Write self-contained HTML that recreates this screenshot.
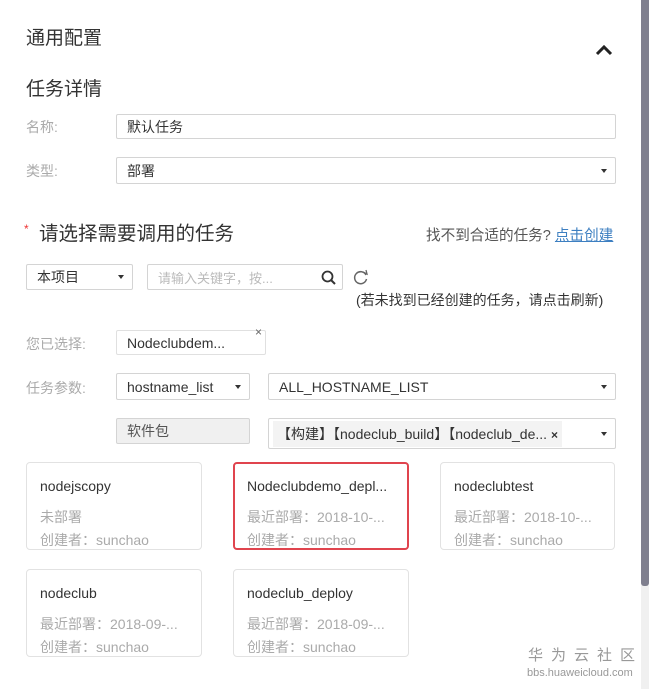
<!DOCTYPE html>
<html><head><meta charset="utf-8"><style>
*{box-sizing:border-box;margin:0;padding:0}
body{width:649px;height:689px;background:#fff;position:relative;overflow:hidden;font-family:"Liberation Sans","Noto Sans CJK SC",sans-serif;color:#333}
.a{position:absolute;white-space:nowrap}
.box{position:absolute;border:1px solid #d4d4d4;border-radius:2px;background:#fff;font-size:14px;color:#333;padding-left:10px;display:flex;align-items:center}
.lbl{position:absolute;font-size:14px;color:#aaa}
.caret{position:absolute;right:8px;top:50%;margin-top:-2px;width:0;height:0;border-left:3.5px solid transparent;border-right:3.5px solid transparent;border-top:4px solid #333}
.card{position:absolute;border:1px solid #e2e2e2;border-radius:4px;width:176px;height:88px;padding-left:13px}
.card .t{position:absolute;left:13px;top:15px;font-size:14px;color:#333}
.card .s1{position:absolute;left:13px;top:44px;font-size:14px;color:#aaa}
.card .s2{position:absolute;left:13px;top:67px;font-size:14px;color:#aaa}
</style></head><body>
<div style="position:absolute;left:641px;top:0;width:8px;height:689px;background:#f0f0f0"></div>
<div style="position:absolute;left:641px;top:0;width:8px;height:586px;background:#7f7f8e;border-radius:0 0 3px 3px"></div>
<div class="a" style="left:26px;top:23px;font-size:19px;color:#333">通用配置</div>
<svg class="a" style="left:595px;top:44px" width="18" height="12"><path d="M2 10 L9 3 L16 10" stroke="#222" stroke-width="3" fill="none"/></svg>
<div class="a" style="left:26px;top:74px;font-size:19px;color:#333">任务详情</div>
<div class="lbl" style="left:26px;top:117px">名称:</div>
<div class="box" style="left:116px;top:114px;width:500px;height:25px">默认任务</div>
<div class="lbl" style="left:26px;top:161px">类型:</div>
<div class="box" style="left:116px;top:157px;width:500px;height:27px">部署<span class="caret"></span></div>
<div class="a" style="left:24px;top:222px;color:#e33;font-size:12px">*</div>
<div class="a" style="left:39px;top:217px;font-size:19.5px;color:#333">请选择需要调用的任务</div>
<div class="a" style="left:426px;top:224px;font-size:14.6px;color:#555">找不到合适的任务? <span style="color:#3d7fc1;text-decoration:underline">点击创建</span></div>
<div class="box" style="left:26px;top:264px;width:107px;height:26px">本项目<span class="caret"></span></div>
<div class="box" style="left:147px;top:264px;width:196px;height:26px;color:#bbb;font-size:13px">请输入关键字，按...
<svg style="position:absolute;right:6px;top:5px" width="15" height="15"><circle cx="6.5" cy="6.5" r="5" stroke="#333" stroke-width="1.8" fill="none"/><path d="M10 10 L14 14" stroke="#333" stroke-width="2"/></svg></div>
<svg class="a" style="left:352px;top:268px" width="18" height="18"><path d="M14 7 A6 6 0 1 0 14.5 11" stroke="#666" stroke-width="1.5" fill="none"/><path d="M11 4 L15 6 L14 2" stroke="#666" stroke-width="1.3" fill="none"/></svg>
<div class="a" style="left:356px;top:290px;font-size:14px;color:#333">(若未找到已经创建的任务，请点击刷新)</div>
<div class="lbl" style="left:26px;top:334px">您已选择:</div>
<div class="box" style="left:116px;top:330px;width:150px;height:25px;border-color:#e0e0e0">Nodeclubdem...</div>
<div class="a" style="left:255px;top:325px;font-size:12px;color:#666">×</div>
<div class="lbl" style="left:26px;top:378px">任务参数:</div>
<div class="box" style="left:116px;top:373px;width:134px;height:27px">hostname_list<span class="caret"></span></div>
<div class="box" style="left:268px;top:373px;width:348px;height:27px">ALL_HOSTNAME_LIST<span class="caret"></span></div>
<div class="box" style="left:116px;top:418px;width:134px;height:26px;background:#f0f0f0;color:#555">软件包</div>
<div class="box" style="left:268px;top:418px;width:348px;height:31px;padding-left:4px"><span style="background:#f3f3f3;padding:3px 4px;font-size:14px">【构建】【nodeclub_build】【nodeclub_de... <b style="font-size:12px">×</b></span><span class="caret"></span></div>
<div class="card" style="left:26px;top:462px"><div class="t">nodejscopy</div><div class="s1">未部署</div><div class="s2">创建者：sunchao</div></div>
<div class="card" style="left:233px;top:462px;border:2px solid #e0444e;width:176px"><div class="t" style="left:12px;top:14px">Nodeclubdemo_depl...</div><div class="s1" style="left:12px;top:43px">最近部署：2018-10-...</div><div class="s2" style="left:12px;top:66px">创建者：sunchao</div></div>
<div class="card" style="left:440px;top:462px;width:175px"><div class="t">nodeclubtest</div><div class="s1">最近部署：2018-10-...</div><div class="s2">创建者：sunchao</div></div>
<div class="card" style="left:26px;top:569px"><div class="t">nodeclub</div><div class="s1">最近部署：2018-09-...</div><div class="s2">创建者：sunchao</div></div>
<div class="card" style="left:233px;top:569px"><div class="t">nodeclub_deploy</div><div class="s1">最近部署：2018-09-...</div><div class="s2">创建者：sunchao</div></div>
<div class="a" style="left:528px;top:648px;font-size:15px;line-height:16px;color:#999;letter-spacing:8px">华为云社区</div>
<div class="a" style="left:527px;top:667px;font-size:11px;line-height:12px;color:#999">bbs.huaweicloud.com</div>
</body></html>
